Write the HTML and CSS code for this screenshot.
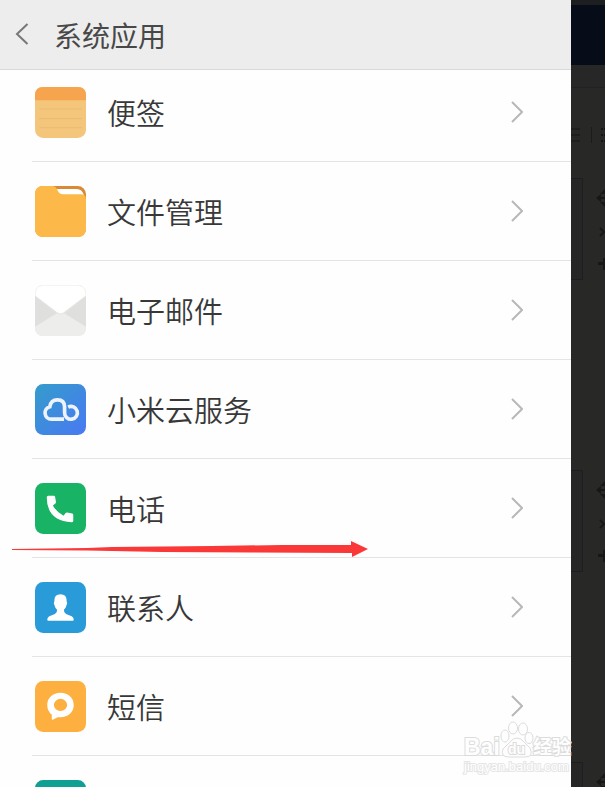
FILE: index.html
```html
<!DOCTYPE html>
<html lang="zh-CN">
<head>
    <meta charset="UTF-8">
    <meta name="viewport" content="width=device-width, initial-scale=1.0">
    <title>系统应用</title>
    <link rel="stylesheet" href="styles.css">
</head>
<body>

    <div class="phone">
        <header class="header">
            <button class="back" type="button" aria-label="返回">
                <svg width="16" height="24" viewBox="0 0 16 24"><path d="M13.500 1 L3 11 L13.500 21"/></svg>
            </button>
            <h1>系统应用</h1>
        </header>

        <nav class="list">
            <!-- Notes -->
            <a class="row" href="#notes">
                <svg class="icon" viewBox="0 0 50 50">
                    <rect width="50" height="50" rx="8" fill="#f4c67b"/>
                    <path d="M0 13 V8 Q0 0 8 0 H42 Q50 0 50 8 V13 Z" fill="#f6a54e"/>
                    <path d="M4 21.500 H46 M4 31 H46 M4 40 H46" stroke="#e9bb74" stroke-width="1"/>
                </svg>
                <span class="name">便签</span>
                <svg class="arrow" viewBox="0 0 12 22"><path d="M1 1 L11 11 L1 21"/></svg>
            </a>
            <!-- Files -->
            <a class="row" href="#files">
                <svg class="icon" viewBox="0 0 50 50">
                    <rect width="50" height="50" rx="8" fill="#d98a35"/>
                    <path d="M19 3 H41 Q46 3 48 9 H22 Z" fill="#fff"/>
                    <path d="M8 0 H17 Q20 0 21.500 3 L23 6 Q24 8 27 8 H45 Q50 8 50 13 V42 Q50 50 42 50 H8 Q0 50 0 42 V8 Q0 0 8 0 Z" fill="#fcb94a"/>
                </svg>
                <span class="name">文件管理</span>
                <svg class="arrow" viewBox="0 0 12 22"><path d="M1 1 L11 11 L1 21"/></svg>
            </a>
            <!-- Mail -->
            <a class="row" href="#mail">
                <svg class="icon" viewBox="0 0 50 50">
                    <rect width="50" height="50" rx="8" fill="#dfdfdd"/>
                    <path d="M0 41 L21 28 Q25 26 29 28 L50 41 V42 Q50 50 42 50 H8 Q0 50 0 42 Z" fill="#ededeb"/>
                    <path d="M0.500 10 V8 Q0.500 0.500 8 0.500 H42 Q49.500 0.500 49.500 8 V11 L28 27.500 Q25 29.500 22 27.500 L0.500 11 Z" fill="#fff" stroke="#f4f4f2" stroke-width="1"/>
                    <path d="M0 11 L22 27.500 Q25 29.500 28 27.500 L50 11" fill="none" stroke="#cfcfcd" stroke-width="0.500"/>
                </svg>
                <span class="name">电子邮件</span>
                <svg class="arrow" viewBox="0 0 12 22"><path d="M1 1 L11 11 L1 21"/></svg>
            </a>
            <!-- Mi Cloud -->
            <a class="row" href="#cloud">
                <svg class="icon" viewBox="0 0 50 50">
                    <defs>
                        <linearGradient id="sky" x1="0" y1="0" x2="1" y2="1">
                            <stop offset="0" stop-color="#349ccb"/>
                            <stop offset="1" stop-color="#4979f3"/>
                        </linearGradient>
                    </defs>
                    <rect width="50" height="50" rx="8" fill="url(#sky)"/>
                    <path d="M28.500 34.500 H16 A6.200 6.200 0 0 1 14.500 22.300 Q15.500 15.500 22 15.500 Q29 15.500 29 22.500 V28 A6.300 6.300 0 1 0 32.500 22.600" fill="none" stroke="#edf3fc" stroke-width="3.600"/>
                </svg>
                <span class="name">小米云服务</span>
                <svg class="arrow" viewBox="0 0 12 22"><path d="M1 1 L11 11 L1 21"/></svg>
            </a>
            <!-- Phone -->
            <a class="row" href="#phone">
                <svg class="icon" viewBox="0 0 50 50">
                    <rect width="50" height="50" rx="8" fill="#19b365"/>
                    <path d="M13 12.500 H18.500 Q19.500 12.500 19.700 13.500 L20.500 18.500 Q20.600 19.500 20 20 L17.500 22 Q21 28.500 28 32 L30 29.500 Q30.700 28.900 31.500 29 L36.500 30 Q37.500 30.200 37.500 31.200 V37 Q37.500 38.500 36 38.500 Q11.500 37 11.500 14 Q11.500 12.500 13 12.500 Z" fill="#fff"/>
                </svg>
                <span class="name">电话</span>
                <svg class="arrow" viewBox="0 0 12 22"><path d="M1 1 L11 11 L1 21"/></svg>
            </a>
            <!-- Contacts -->
            <a class="row" href="#contacts">
                <svg class="icon" viewBox="0 0 50 50">
                    <rect width="50" height="50" rx="8" fill="#289bd8"/>
                    <path d="M25 12 Q31 12 31 18 V19 Q32.200 20 31 22.500 Q30 26 28.500 27 Q28 30 31 31.500 L36 33.500 Q38 34.500 38 37 Q38 38 37 38 H13 Q12 38 12 37 Q12 34.500 14 33.500 L19 31.500 Q22 30 21.500 27 Q20 26 19 22.500 Q17.800 20 19 19 V18 Q19 12 25 12 Z" fill="#fff"/>
                </svg>
                <span class="name">联系人</span>
                <svg class="arrow" viewBox="0 0 12 22"><path d="M1 1 L11 11 L1 21"/></svg>
            </a>
            <!-- Messages -->
            <a class="row" href="#messages">
                <svg class="icon" viewBox="0 0 50 50">
                    <rect width="50" height="50" rx="8" fill="#fdb040"/>
                    <path d="M25 11.500 C32.500 11.500 38 16.500 38 23.500 C38 30.500 32.500 35.500 25 35.500 H22 L17.500 38 Q16.500 38.300 16.500 37.300 V33 Q12 29.500 12 23.500 C12 16.500 17.500 11.500 25 11.500 Z" fill="#fff"/>
                    <ellipse cx="25" cy="23.500" rx="6.500" ry="6" fill="#fdb040"/>
                </svg>
                <span class="name">短信</span>
                <svg class="arrow" viewBox="0 0 12 22"><path d="M1 1 L11 11 L1 21"/></svg>
            </a>
            <a class="row" href="#more" aria-label="更多">
                <svg class="icon" viewBox="0 0 50 50">
                    <rect width="50" height="50" rx="8" fill="#0f9f93"/>
                </svg>
            </a>
        </nav>
    </div>

    <!-- Dimmed page behind the phone view -->
    <aside class="side" aria-hidden="true">
        <div class="side-top"></div>
        <div class="side-banner"></div>
        <div class="side-bar"></div>
        <svg class="side-tools" width="34" height="699" viewBox="0 0 34 699">
            <defs>
                <g id="tools">
                    <path d="M0 0.500 H11.500 V101.500 H0" fill="#262626" stroke="#1e1e1e"/>
                    <path d="M25 20 L30 16 V24 Z M34 11 L29 16 H34 Z M34 29 L29 24 H34 Z M29 19 H34 V21 H29 Z"/>
                    <path d="M29 50 L33 54 L29 58" fill="none" stroke="#171716" stroke-width="2"/>
                    <path d="M27 84 H32 V80 H34 V92 H32 V87 H27 Z"/>
                </g>
            </defs>
            <path d="M0 41 H9 M0 47 H9 M0 53 H9" stroke="#1f1f1e" stroke-width="2"/>
            <path d="M20.500 39 V55" stroke="#1c1c1b"/>
            <path d="M30 41 H34 M30 47 H34 M30 53 H34" stroke="#151514" stroke-width="2" stroke-dasharray="2 1"/>
            <g fill="#171716">
                <use href="#tools" y="90"/>
                <use href="#tools" y="382"/>
                <use href="#tools" y="674"/>
            </g>
        </svg>
    </aside>

    <!-- Red pointer under the phone entry -->
    <svg class="pointer" width="356" height="18" viewBox="0 0 356 18" aria-hidden="true">
        <path d="M0 9 L75 8 L100 7 L200 6 L270 5 L339 5 V1 L356 9 L340 17 V13 L240 12.500 L150 12 L75 10.500 L0 10 Z"/>
    </svg>

    <svg class="watermark" width="112" height="60" viewBox="0 0 112 60" aria-hidden="true">
        <g class="mark">
            <ellipse cx="45" cy="19" rx="4" ry="6"/>
            <ellipse cx="53" cy="11" rx="4.500" ry="6"/>
            <ellipse cx="63" cy="12" rx="4.500" ry="6"/>
            <ellipse cx="69" cy="21" rx="4" ry="5.500"/>
            <path d="M57 21 Q61 21 64 25 L70 31 Q74 40 65 40 H49 Q40 40 43 32 L50 25 Q53 21 57 21 Z"/>
            <text class="brand" x="4" y="38">Bai</text>
            <text class="small" x="48" y="37">du</text>
            <text class="cn" x="73" y="37">经验</text>
            <text class="url" x="4" y="54">jingyan.baidu.com</text>
        </g>
    </svg>

</body>
</html>
```

FILE: styles.css
```css
* {
    box-sizing: border-box;
}
body {
    margin: 0;
    height: 100vh;
    overflow: hidden;
    display: flex;
    position: relative;
    background: #fefefe;
    color: #383838;
    font-family: "Noto Sans CJK SC", sans-serif;
}
.phone {
    flex: 1;
    min-width: 0;
    overflow: hidden;
}

/* Header */
.header {
    position: relative;
    z-index: 1;
    display: flex;
    align-items: center;
    gap: 24px;
    height: 70px;
    padding-left: 14px;
    background: #ededee;
    border-bottom: 1px solid #d9d9d9;
}
.header h1 {
    margin: 0;
    font-size: 28px;
    line-height: 40px;
    font-weight: 400;
    color: #484848;
}
.back {
    display: flex;
    padding: 0;
    border: none;
    background: none;
    cursor: pointer;
}
.back path {
    fill: none;
    stroke: #777;
    stroke-width: 2;
}

/* App list, scrolled a little under the header */
.list {
    margin-top: -7px;
    padding-left: 32px;
}
.row {
    display: flex;
    align-items: center;
    gap: 21px;
    height: 99px;
    padding: 0 48px 0 3px;
    border-bottom: 1px solid #e4e4e4;
    color: inherit;
    text-decoration: none;
}
.icon {
    width: 51px;
    height: 51px;
}
.name {
    flex: 1;
    font-size: 29px;
    line-height: 40px;
    font-weight: 350;
}
.arrow {
    width: 12px;
    height: 22px;
}
.arrow path {
    fill: none;
    stroke: #b8b8b8;
    stroke-width: 2;
}

/* Dark strip */
.side {
    display: flex;
    flex-direction: column;
    width: 34px;
    overflow: hidden;
    background: #282826;
}
.side-top {
    flex: none;
    height: 5px;
    background: #1d1e20;
}
.side-banner {
    flex: none;
    height: 60px;
    background: #060d18;
}
.side-bar {
    flex: none;
    height: 23px;
    background: #272727;
    border-bottom: 1px solid #212121;
}
.side-tools {
    flex: none;
}

.pointer {
    position: absolute;
    left: 12px;
    top: 540px;
    fill: #fb3838;
}

/* Watermark */
.watermark {
    position: absolute;
    right: 33px;
    bottom: 10px;
}
.mark {
    fill: #fff;
    stroke: #d9d9d9;
    stroke-width: 1;
    opacity: 0.9;
}
.mark text {
    font-family: "Liberation Sans", "Noto Sans CJK SC", sans-serif;
    font-weight: bold;
    paint-order: stroke;
    stroke-width: 2;
}
.mark .brand {
    font-size: 23px;
}
.mark .cn {
    font-size: 19px;
}
.mark .small {
    font-size: 14px;
}
.mark .url {
    font-size: 13px;
    font-weight: normal;
    stroke: #e4e4e4;
}
```
